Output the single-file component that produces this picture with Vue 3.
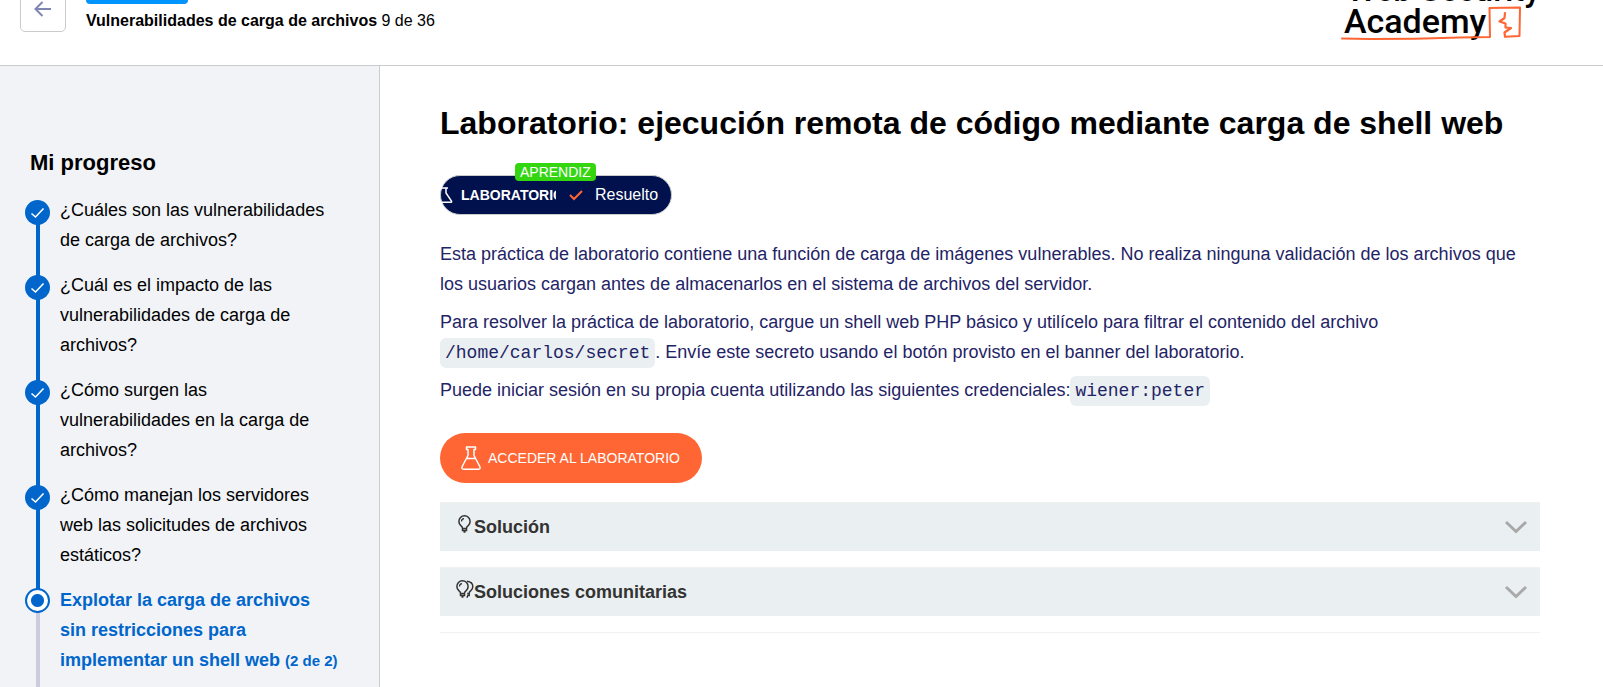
<script setup>
const steps = [
  { text: '¿Cuáles son las vulnerabilidades de carga de archivos?', done: true },
  { text: '¿Cuál es el impacto de las vulnerabilidades de carga de archivos?', done: true },
  { text: '¿Cómo surgen las vulnerabilidades en la carga de archivos?', done: true },
  { text: '¿Cómo manejan los servidores web las solicitudes de archivos estáticos?', done: true },
  {
    text: 'Explotar la carga de archivos sin restricciones para implementar un shell web',
    note: '(2 de 2)',
    done: false,
  },
]
</script>

<template>
  <div class="page">
    <header class="topbar">
      <button class="back" type="button" aria-label="Volver">
        <svg width="18" height="16" viewBox="0 0 18 16" fill="none" stroke="#7f86b5" stroke-width="2">
          <path d="M17 8H2M8.5 1L1.5 8L8.5 15" />
        </svg>
      </button>
      <div class="topic">
        <span class="topic-tag"></span>
        <p class="topic-name"><b>Vulnerabilidades de carga de archivos</b> 9 de 36</p>
      </div>
      <a class="logo" href="#" aria-label="Web Security Academy">
        <svg width="200" height="65" viewBox="0 0 200 65">
          <text class="logo-text" x="7" y="1" font-size="33">Web Security</text>
          <text class="logo-text" x="4" y="33" font-size="34">Academy</text>
          <g fill="none" stroke="#ff6633" stroke-linejoin="round" stroke-linecap="round">
            <path stroke-width="2" d="M2 38.5L30 39L75 38.7L120 37.5L150 37L149.500 8L180 7.500L179.500 36L165 36.700" />
            <path stroke-width="2.200" d="M165 13L164.500 18L159.500 21.500L165.500 23.500L165.500 27.500L171 28L164.500 32.500L165 36.500" />
          </g>
        </svg>
      </a>
    </header>

    <div class="body">
      <nav class="sidebar" aria-labelledby="progress-title">
        <h2 id="progress-title">Mi progreso</h2>
        <ol class="steps">
          <li v-for="step in steps" :key="step.text" class="step" :class="{ current: !step.done }">
            <span class="rail">
              <span class="dot">
                <svg v-if="step.done" width="25" height="25" viewBox="0 0 25 25" fill="none" stroke="#fff" stroke-width="1.6">
                  <path d="M6.500 13.500L10.500 17L18.500 8.500" />
                </svg>
              </span>
            </span>
            <a href="#">{{ step.text }} <small v-if="step.note">{{ step.note }}</small></a>
          </li>
        </ol>
      </nav>

      <main class="content">
        <h1>Laboratorio: ejecución remota de código mediante carga de shell web</h1>

        <div class="status">
          <span class="level">APRENDIZ</span>
          <span class="kind">
            <svg width="20" height="16" viewBox="0 0 20 16" fill="none" stroke="#fff" stroke-width="1.500">
              <path d="M5 1H15M7 1V6L1.500 14Q1 15.200 2.500 15.200H17.500Q19 15.200 18.500 14L13 6V1M5 8.500H8" />
            </svg>
            <b>LABORATORIO</b>
          </span>
          <span class="result">
            <svg width="14" height="12" viewBox="0 0 14 12" fill="none" stroke="#ff6633" stroke-width="2">
              <path d="M1 6L5 10L13 2" />
            </svg>
            Resuelto
          </span>
        </div>

        <p>
          Esta práctica de laboratorio contiene una función de carga de imágenes vulnerables. No realiza
          ninguna validación de los archivos que los usuarios cargan antes de almacenarlos en el sistema
          de archivos del servidor.
        </p>
        <p>
          Para resolver la práctica de laboratorio, cargue un shell web PHP básico y utilícelo para
          filtrar el contenido del archivo <code>/home/carlos/secret</code>. Envíe este secreto usando el
          botón provisto en el banner del laboratorio.
        </p>
        <p>
          Puede iniciar sesión en su propia cuenta utilizando las siguientes
          credenciales:<code>wiener:peter</code>
        </p>

        <a class="launch" href="#">
          <svg width="20" height="24" viewBox="0 0 20 24" fill="none" stroke="#fff" stroke-width="1.500" stroke-linejoin="round">
            <path d="M5.500 1H14.500V3.500H13V9.500L18.800 20.500Q19.800 23.200 17.500 23.200H2.500Q0.200 23.200 1.200 20.500L7 9.500V3.500H5.500ZM5.500 12.500H14.500" />
          </svg>
          ACCEDER AL LABORATORIO
        </a>

        <section class="panels">
          <button class="panel" type="button" aria-expanded="false">
            <svg class="bulb" width="18" height="18" viewBox="0 0 18 18" fill="none" stroke="#333332" stroke-width="1.500">
              <path d="M6.500 13.500Q6.500 11.800 4.800 10.600A5.600 5.600 0 1 1 12.200 10.600Q10.500 11.800 10.500 13.500ZM6.500 13.500V15.500H10.500V13.500M7.500 17H9.500" />
              <path stroke-width="1.200" d="M5.500 6.500Q5.500 4 8 3.700" />
            </svg>
            <span>Solución</span>
            <svg class="chevron" width="24" height="14" viewBox="0 0 24 14"><path d="M2 2L12 11.500L22 2" /></svg>
          </button>
          <button class="panel" type="button" aria-expanded="false">
            <svg class="bulb" width="18" height="18" viewBox="0 0 18 18" fill="none" stroke="#333332" stroke-width="1.500">
              <path d="M4.500 13.500Q4.500 11.800 2.800 10.600A5.600 5.600 0 1 1 10.200 10.600Q8.500 11.800 8.500 13.500ZM4.500 13.500V15.500H8.500V13.500M5.500 17H7.500" />
              <path stroke-width="1.200" d="M3.500 6.500Q3.500 4 6 3.700" />
              <path d="M11 1.200Q16.800 1.800 16.800 6.500Q16.800 9 14.800 10.600Q13.200 11.800 13.200 13.500H11.200M13.200 13.500V15.500H11M10.500 17H12" />
            </svg>
            <span>Soluciones comunitarias</span>
            <svg class="chevron" width="24" height="14" viewBox="0 0 24 14"><path d="M2 2L12 11.500L22 2" /></svg>
          </button>
        </section>
      </main>
    </div>
  </div>
</template>

<style>
body {
  margin: 0;
  background: #fff;
}
</style>

<style scoped>
.page {
  display: flex;
  flex-direction: column;
  height: 100vh;
  overflow: hidden;
  color: #000;
  font-family: "Liberation Sans", Arial, sans-serif;
  font-size: 18px;
  line-height: 30px;
}
a {
  color: inherit;
  text-decoration: none;
}
button {
  font: inherit;
  cursor: pointer;
}

.topbar {
  display: flex;
  flex: none;
  align-items: flex-end;
  height: 65px;
  padding: 0 63px 0 20px;
  overflow: hidden;
  border-bottom: 1px solid #c8cccc;
}
.back {
  display: flex;
  align-items: center;
  justify-content: center;
  width: 46px;
  height: 46px;
  margin-bottom: 33px;
  padding: 0;
  background: #fff;
  border: 1px solid #c8cccc;
  border-radius: 5px;
}
.topic {
  display: flex;
  flex: 1;
  flex-direction: column;
  gap: 7px;
  margin: 0 20px 34px;
}
.topic-tag {
  width: 102px;
  height: 20px;
  background: #0094ff;
  border-radius: 4px;
}
.topic-name {
  margin: 0;
  font-size: 16px;
  line-height: 20px;
}
.logo svg {
  display: block;
}
.logo-text {
  font-family: Roboto, sans-serif;
  font-weight: 500;
}

.body {
  display: flex;
  flex: 1;
  min-height: 0;
}
.sidebar {
  flex: none;
  box-sizing: border-box;
  width: 380px;
  padding: 82px 40px 0 25px;
  overflow: hidden;
  background: #f1f3f7;
  border-right: 1px solid #c8cccc;
}
.sidebar h2 {
  margin: 0 0 17px 5px;
  font-size: 22px;
  line-height: 30px;
}
.steps {
  margin: 0;
  padding: 0;
  list-style: none;
}
.step {
  display: flex;
  gap: 10px;
}
.step a {
  flex: 1;
  padding-bottom: 15px;
}
.step small {
  font-size: 15px;
  line-height: 20px;
}
.rail {
  display: flex;
  flex: none;
  justify-content: center;
  width: 25px;
  background: linear-gradient(#0066cc, #0066cc) 11px 0 / 4px 100% no-repeat;
}
.step:first-child .rail {
  background-position: 11px 10px;
}
.dot {
  box-sizing: border-box;
  width: 25px;
  height: 25px;
  margin-top: 5px;
  background: #0066cc;
  border-radius: 50%;
}
.dot svg {
  display: block;
}
.current a {
  color: #0066cc;
  font-weight: bold;
}
.current .rail {
  background:
    linear-gradient(#0066cc, #0066cc) 11px 0 / 4px 12px no-repeat,
    linear-gradient(#cccce0, #cccce0) 11px 0 / 4px 100% no-repeat;
}
.current .dot {
  margin-top: 3px;
  background: radial-gradient(circle, #0066cc 6px, #fff 7px);
  border: 2px solid #0066cc;
}

.content {
  flex: 1;
  max-width: 1100px;
  padding: 37px 60px 0;
  color: #1f2466;
}
h1 {
  margin: 0 0 32px;
  color: #000;
  font-size: 32px;
  line-height: 40px;
}
.status {
  position: relative;
  display: flex;
  box-sizing: border-box;
  width: 232px;
  height: 40px;
  margin-bottom: 24px;
  color: #fff;
  font-size: 16px;
  background: #00114d;
  border: 1px solid #c8cccc;
  border-radius: 20px;
}
.level {
  position: absolute;
  top: -13px;
  left: 74px;
  padding: 0 5px;
  font-size: 14px;
  line-height: 18px;
  background: #33d60f;
  border-radius: 4px;
}
.kind {
  display: flex;
  flex: none;
  gap: 8px;
  align-items: center;
  justify-content: center;
  width: 115px;
  overflow: hidden;
  font-size: 14px;
}
.kind svg,
.kind b {
  flex: none;
}
.result {
  display: flex;
  gap: 12px;
  align-items: center;
  padding-left: 13px;
}
p {
  margin: 0 0 8px;
}
code {
  padding: 5px;
  font-family: "Liberation Mono", monospace;
  font-size: 18px;
  line-height: 20px;
  background: #eaeff2;
  border-radius: 6px;
}
.launch {
  display: inline-flex;
  gap: 7px;
  align-items: center;
  height: 50px;
  margin-top: 20px;
  padding: 0 22px 0 21px;
  color: #fff;
  font-size: 14px;
  background: #ff6633;
  border-radius: 25px;
}
.panels {
  display: flex;
  flex-direction: column;
  gap: 16px;
  margin-top: 19px;
  padding-bottom: 16px;
  border-bottom: 1px solid #f0f2f2;
}
.panel {
  display: flex;
  align-items: center;
  width: 100%;
  height: 49px;
  padding: 0 12px 0 16px;
  color: #333332;
  font-weight: bold;
  text-align: left;
  background: #eaeff2;
  border: 0;
  border-top: 1px solid #f0f2f2;
}
.panel span {
  flex: 1;
}
.bulb {
  margin-bottom: 6px;
}
.chevron {
  fill: none;
  stroke: #a9a9a9;
  stroke-width: 3;
}
</style>
